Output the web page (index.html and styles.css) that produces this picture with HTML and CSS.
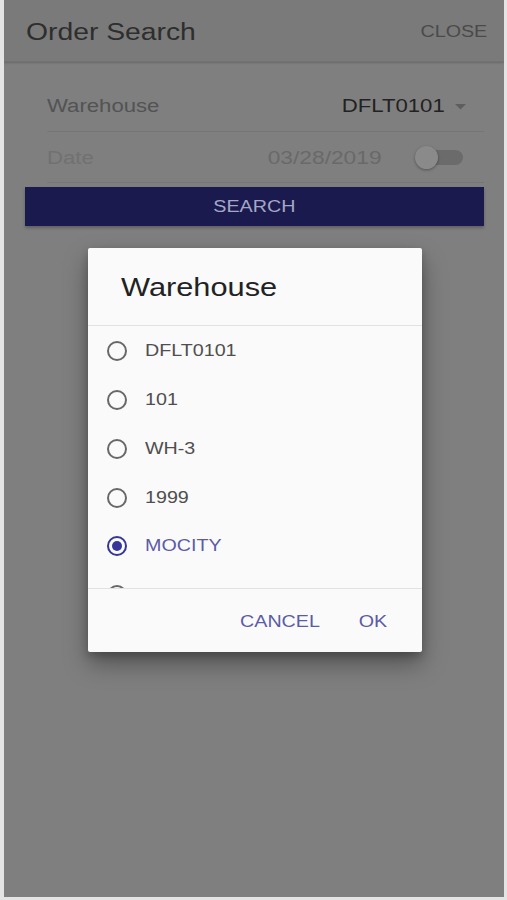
FILE: index.html
```html
<!DOCTYPE html>
<html lang="en">
<head>
<meta charset="utf-8">
<title>Order Search</title>
<link rel="stylesheet" href="styles.css">
</head>
<body>
<div class="phone">
  <header class="topbar">
    <h1 class="title"><span class="t">Order Search</span></h1>
    <span class="close t r">CLOSE</span>
  </header>
  <main class="form">
    <div class="row">
      <span class="label"><span class="t">Warehouse</span></span>
      <span class="select"><span class="t r">DFLT0101</span>
        <svg class="caret" width="11" height="6" viewBox="0 0 11 6"><path d="M0 0h11L5.5 5.5z" fill="#5e5e5e"/></svg>
      </span>
    </div>
    <div class="row">
      <span class="label faint"><span class="t">Date</span></span>
      <span class="date t r">03/28/2019</span>
      <span class="toggle"><span class="track"></span><span class="thumb"></span></span>
    </div>
    <button class="search"><span class="t c">SEARCH</span></button>
  </main>

  <div class="dialog">
    <h2 class="dtitle"><span class="t">Warehouse</span></h2>
    <ul class="options">
      <li class="opt"><span class="radio"></span><span class="t">DFLT0101</span></li>
      <li class="opt"><span class="radio"></span><span class="t">101</span></li>
      <li class="opt"><span class="radio"></span><span class="t">WH-3</span></li>
      <li class="opt"><span class="radio"></span><span class="t">1999</span></li>
      <li class="opt selected"><span class="radio"></span><span class="t">MOCITY</span></li>
      <li class="opt"><span class="radio"></span><span class="t">WALGREEN</span></li>
    </ul>
    <div class="actions">
      <span class="btn t r">CANCEL</span>
      <span class="btn t r">OK</span>
    </div>
  </div>
</div>
</body>
</html>
```

FILE: styles.css
```css
* { box-sizing: border-box; }
html, body { margin: 0; padding: 0; }
body {
  background: #e4e4e4;
  font-family: "Liberation Sans", Arial, sans-serif;
  width: 507px;
  height: 900px;
  overflow: hidden;
}
/* the screenshot's text is horizontally stretched */
.t {
  display: inline-block;
  transform: scaleX(1.23);
  transform-origin: left center;
  white-space: nowrap;
}
.t.r { transform-origin: right center; }
.t.c { transform-origin: center center; }

.phone {
  position: relative;
  margin-left: 4px;
  width: 500px;
  height: 897px;
  background: #7f7f7f;
  overflow: hidden;
}
.topbar {
  height: 62px;
  background: #7a7a7a;
  display: flex;
  align-items: center;
  justify-content: space-between;
  padding: 3px 17px 0 22px;
  box-shadow: 0 1px 2px rgba(0,0,0,0.18);
  border-bottom: 1px solid #727272;
}
.title {
  margin: 0;
  font-weight: normal;
  font-size: 23px;
  color: #2e2e2e;
}
.close {
  font-size: 16px;
  color: #4a4a4a;
  margin-bottom: 1px;
}
.form {
  padding: 18px 20px 0 21px;
  display: flex;
  flex-direction: column;
}
.row {
  margin-left: 22px;
  display: flex;
  align-items: center;
  border-bottom: 1px solid #767676;
  height: 52px;
}
.row + .row { height: 51px; }
.label {
  font-size: 18px;
  color: #535353;
  flex: 1;
  padding-top: 2px;
}
.label.faint { color: #717171; }
.select {
  font-size: 18px;
  color: #222;
  display: flex;
  align-items: center;
  margin-right: 18px;
  padding-top: 2px;
}
.caret { margin-left: 10px; }
.date {
  font-size: 18.5px;
  color: #696969;
  margin-right: 33px;
  padding-top: 1px;
}
.toggle {
  position: relative;
  width: 48px;
  height: 26px;
  margin-right: 21px;
}
.track {
  position: absolute;
  left: 6px;
  top: 6px;
  width: 42px;
  height: 15px;
  border-radius: 8px;
  background: #6b6b6b;
}
.thumb {
  position: absolute;
  left: 0;
  top: 2px;
  width: 23px;
  height: 23px;
  border-radius: 50%;
  background: #8a8a8a;
  box-shadow: 0 1px 3px rgba(0,0,0,0.35);
}
.search {
  margin-top: 4px;
  height: 39px;
  border: none;
  background: #1a1a4f;
  color: #a5a7c6;
  font-family: inherit;
  font-size: 16px;
  padding: 1px 0 0;
  box-shadow: 0 2px 3px rgba(0,0,0,0.25);
}
.dialog {
  position: absolute;
  left: 84px;
  top: 248px;
  width: 334px;
  height: 404px;
  background: #fafafa;
  border-radius: 2px;
  box-shadow: 0 12px 24px rgba(0,0,0,0.35), 0 4px 8px rgba(0,0,0,0.2);
  display: flex;
  flex-direction: column;
}
.dtitle {
  margin: 0;
  height: 78px;
  display: flex;
  align-items: center;
  padding: 2px 0 0 33px;
  font-weight: normal;
  font-size: 25px;
  color: #222;
  border-bottom: 1px solid #e2e2e2;
}
.options {
  list-style: none;
  margin: 0;
  padding: 1px 0 0;
  height: 263px;
  overflow: hidden;
  border-bottom: 1px solid #e2e2e2;
}
.opt {
  height: 48.75px;
  display: flex;
  align-items: center;
  padding-left: 19px;
  font-size: 16px;
  color: #4f4f4f;
}
.radio {
  flex: none;
  width: 20px;
  height: 20px;
  border-radius: 50%;
  border: 2px solid #686868;
  margin-right: 18px;
  display: flex;
  align-items: center;
  justify-content: center;
}
.selected { color: #5b5ba9; }
.selected .radio { border-color: #35359a; }
.selected .radio::after {
  content: "";
  width: 10px;
  height: 10px;
  border-radius: 50%;
  background: #35359a;
}
.actions {
  flex: 1;
  display: flex;
  align-items: center;
  justify-content: flex-end;
  gap: 44px;
  padding: 2px 35px 0 0;
}
.btn {
  font-size: 16px;
  color: #5b5ba9;
}
```
